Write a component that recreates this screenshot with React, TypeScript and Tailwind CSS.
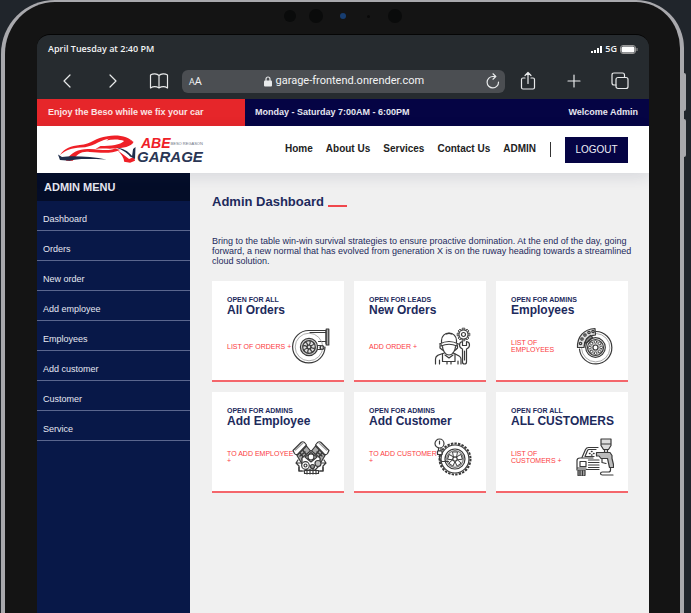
import React from "react";

const iconProps = {
  viewBox: "0 0 38 38",
  className: "h-[38px] w-[38px] shrink-0",
  fill: "none",
  stroke: "#3a3a3a",
  strokeWidth: 1.2,
  strokeLinecap: "round" as const,
  strokeLinejoin: "round" as const,
  "aria-hidden": true,
};

const spokes = (count: number) => Array.from({ length: count }, (_, i) => (i * 360) / count);

function TurboIcon() {
  return (
    <svg {...iconProps}>
      <path d="M34 16.5V3.5H17A16.2 16.2 0 1 0 33 20" />
      <path d="M34 5.5H18M34 14.5H26.500" />
      <path d="M34.200 2h2.600v16h-2.600z" fill="#aaa" />
      <circle cx="17" cy="20" r="13.800" stroke="#888" strokeWidth=".7" />
      <circle cx="17" cy="20" r="8.600" fill="#ccc" />
      <circle cx="17" cy="20" r="6.300" fill="#ddd" />
      <circle cx="17" cy="20" r="2" />
      {spokes(8).map((a) => (
        <path key={a} d="M17 18.200q2-2.200 1-4.300" transform={`rotate(${a} 17 20)`} />
      ))}
      <path d="M25.500 18.500h3v4h-3" />
      <circle cx="30" cy="20.500" r="1.900" />
    </svg>
  );
}

function MechanicIcon() {
  return (
    <svg {...iconProps}>
      <path d="M7.500 15.500v-2a7.500 7.500 0 0 1 15 0v2M5.500 17q9.500-5 19 0M7 17v2q8-3.500 16 0v-2" />
      <path d="M12.500 7q2.500-1.200 5 0M8.500 19.500c0 4 3 8.500 6.500 8.500s6.500-4.500 6.500-8.500" />
      <path d="M6 18.500v2.500l2.500 2M23.500 18.500v2.500l-2 2" />
      <path d="M1.500 37v-5c0-3 2-4 9-6M27 37v-5c0-2-1-3-8-6M5.500 37v-4M24 37v-3" />
      <path d="M8.500 27v7.500h4.500v2.500M21 27v7.500h-4V37M11 34.500h8M11 28l4 3 4-3" />
      <g transform="translate(29.500 7.500)">
        {spokes(8).map((a) => (
          <path key={a} d="M-1.300-4.600v-1.700h2.600v1.700" transform={`rotate(${a})`} strokeWidth=".9" />
        ))}
        <circle r="4.600" />
        <circle r="2" />
      </g>
      <path d="M28.500 22v13q0 2 2 2t2-2V22q3-1 3-4t-3-3.500v4h-4v-4q-3 .5-3 3.500t3 4z" />
      <path d="M30.500 24v9" />
    </svg>
  );
}

function BrakeIcon() {
  return (
    <svg {...iconProps}>
      <path d="M20 4.500A16.200 16.200 0 1 1 3.500 22" />
      <path d="M20.500 6.500A14.200 14.200 0 1 1 5.500 21" stroke="#888" strokeWidth=".7" />
      <path d="M1.500 20.500C1 9.500 8 2 19 1.500l.500 6.500C11.500 8.500 8.500 13 8 20.500z" fill="#ddd" />
      {[[4.500, 16.500], [6, 12], [9, 8], [13, 5.500], [17, 4.500]].map(([x, y]) => (
        <circle key={x} cx={x} cy={y} r="1.200" />
      ))}
      <path d="M8.500 16.500l2-4.500 4-3.500 2 2-4 4z" fill="#888" />
      <circle cx="19.500" cy="20.500" r="9.800" />
      <circle cx="19.500" cy="20.500" r="8" fill="#ccc" />
      {spokes(8).map((a) => (
        <circle key={a} cx="19.500" cy="14.800" r="1.300" transform={`rotate(${a} 19.500 20.500)`} fill="#fff" strokeWidth=".8" />
      ))}
      <circle cx="19.500" cy="20.500" r="2.500" fill="#fff" />
    </svg>
  );
}

function EngineIcon() {
  return (
    <svg {...iconProps}>
      {[false, true].map((flip) => (
        <g key={String(flip)} transform={flip ? "translate(38 0) scale(-1 1)" : undefined}>
          <path d="M1 12.500 9 4.500q1.500-1.500 3.500 0l2 2.500-9 9.500q-2 .5-3-1z" fill="#fff" />
          <path d="M3.500 12l7.500-7" stroke="#999" />
          <path d="M5 17.500l9.500-9.500 4 5-9 12z" fill="#aaa" />
          <path d="M8 15l5 6M11 12.500l4 5M8 18l5-4M10 21l5-4" strokeWidth="1.400" />
          <path d="M6 22l-2 3 3 3v5h3M9 25h4M5 25h3" />
        </g>
      ))}
      <path d="m19 12.500 9 7.500v7l-5 5h-8l-5-5v-7z" fill="#fff" />
      <path d="m13 19 6-4.500 6 4.500-6 5z" fill="#ccc" />
      <circle cx="19" cy="19" r="3" fill="#fff" />
      <circle cx="13.500" cy="27.500" r="3.800" fill="#fff" />
      <circle cx="13.500" cy="27.500" r="1.500" />
      <circle cx="26" cy="25.500" r="3" fill="#bbb" />
      <circle cx="20.500" cy="28.500" r="2" fill="#999" />
      <path d="M12.500 32.500h14v3h-14zM15 32v4M18 31v5M21 31v5M24 32v4M7 29v4h5M31 29v4h-4" />
    </svg>
  );
}

function TireIcon() {
  return (
    <svg {...iconProps}>
      <circle cx="21" cy="21" r="15.500" strokeWidth="2" strokeDasharray="2.400 1.200" strokeLinecap="butt" />
      <circle cx="21" cy="21" r="14" />
      <circle cx="21" cy="21" r="10" />
      <circle cx="21" cy="21" r="8.300" stroke="#777" fill="#eee" />
      {spokes(5).map((a) => (
        <path key={a} d="M19.500 19l-1-5h5l-1 5" transform={`rotate(${a} 21 21)`} fill="#fff" strokeWidth=".9" />
      ))}
      <circle cx="21" cy="21" r="2.200" fill="#fff" />
      <circle cx="5.500" cy="5.500" r="4.500" fill="#fff" />
      <path d="M5.500 6V3M4.500 10v3h2.500v-3" />
      <path d="M3.500 13h4.500v3.500H3.500z" fill="#fff" />
      <path d="M5.500 16.500v4q0 3 3 3h6" />
    </svg>
  );
}

function PaintIcon() {
  return (
    <svg {...iconProps}>
      <path d="M22 9.500h-9.500q-2 0-3 2l-3.500 8M20 11.500h-7q-1 0-1.500 1l-2.500 6H18" />
      <path d="M1 32V22.500q0-2.500 3-2.500h13M4 23.500h6v5H4zM1 30h9" />
      <path d="M12.500 22H23M12.500 24.500H23M12.500 27H23M12.500 29.500H23M10 31.500h13" />
      <path d="M2 32v5q0 1 1 1h4.500q1.500 0 1.500-1v-5zM4 33v4M6.500 33v4" fill="#aaa" />
      <path d="M25 1h10v6.500l-2.500 4h-5L25 7.500zM25 6h10M28.500 11.500v3h3v-3" fill="#ddd" />
      <path d="M20.500 14.500h13.500l2 3v3l1.500 6v3h-4l-2-9H25l-2-2.500h-2.500z" fill="#bbb" />
      <path d="M26 20.500v4l4 1M34.500 29.500V32q0 2-2 2h-6q-2 0-2 1.500t2 1.500H37" />
      <path d="M17.500 15.500h.5M15.500 13.500h.5M15.500 17h.5M13.500 15.500h.5" strokeWidth="1.500" />
    </svg>
  );
}

function CarLogo() {
  return (
    <svg viewBox="0 0 80 32" className="h-8 w-[79px] shrink-0" aria-hidden="true">
      <g fill="#ef2027">
        <path d="M2 21C7 14 13 12 22 11 34 10 38 3 50 2 62 0 72 3 76.500 8 71 4.800 60 3.500 50 4.800 40 7 36 13 23 13.500 14 14 8 16 2 21z" />
        <path d="M76.500 8C74 13 66 14 57 14.500 50 15 46 14 38 15L43 12C54 12 63 11 67 7 62 5 55 5 49 6.500L52 4C62 3 70 4 76.500 8z" />
        <path d="M8 27C13 18 22 14.500 32 15 44 15.500 50 17.500 58 14.500L63 16C54 20 44 19 32 18 24 17 19 20 15 27z" />
        <path d="M60 16L72 25 77 23 78 27 73 29 67 28C67 24 64 20 60 16z" />
      </g>
      <g fill="#1f2d4a">
        <path d="M0 20.500L4 23C14 21.500 34 22.500 49 25.500 30 25 18 24.500 12 27L2 26z" />
        <path d="M59 13.500C66 14.500 71 17 75 22L76 15 78.500 13 78 25 73 22.500C69 18 65 16 59 13.500z" />
      </g>
    </svg>
  );
}

const menuItems = ["Dashboard", "Orders", "New order", "Add employee", "Employees", "Add customer", "Customer", "Service"];
const navLinks = ["Home", "About Us", "Services", "Contact Us", "ADMIN"];

const cards = [
  { tag: "OPEN FOR ALL", title: "All Orders", link: "LIST OF ORDERS +", Icon: TurboIcon },
  { tag: "OPEN FOR LEADS", title: "New Orders", link: "ADD ORDER +", Icon: MechanicIcon },
  { tag: "OPEN FOR ADMINS", title: "Employees", link: "LIST OF EMPLOYEES", Icon: BrakeIcon },
  { tag: "OPEN FOR ADMINS", title: "Add Employee", link: "TO ADD EMPLOYEE +", Icon: EngineIcon },
  { tag: "OPEN FOR ADMINS", title: "Add Customer", link: "TO ADD CUSTOMER +", Icon: TireIcon },
  { tag: "OPEN FOR ALL", title: "ALL CUSTOMERS", link: "LIST OF CUSTOMERS +", Icon: PaintIcon },
];

function BrowserChrome() {
  const line = { fill: "none", stroke: "#e8eaeb", strokeWidth: 1.2, strokeLinecap: "round" as const, strokeLinejoin: "round" as const };
  return (
    <div className="bg-[#262b2f] font-['Open_Sans','Noto_Sans',sans-serif] text-[#f2f3f4]">
      <div className="flex h-7 items-center justify-between pr-[11px] pl-[11px] text-[9px] font-semibold">
        <span>April Tuesday at 2:40 PM</span>
        <span className="flex items-center gap-[3px]">
          <svg viewBox="0 0 11 8" className="h-2 w-[11px]" fill="#fff" aria-hidden="true">
            <path d="M0 6h2v2H0zM3 5h2v3H3zM6 3h2v5H6zM9 1h2v7H9z" />
          </svg>
          5G
          <svg viewBox="0 0 18 9" className="h-[9px] w-[18px]" aria-hidden="true">
            <rect x=".5" y=".5" width="15" height="8" rx="2.500" fill="none" stroke="#999" />
            <rect x="1.500" y="1.500" width="13" height="6" rx="1.500" fill="#fff" />
            <path d="M17 3v3" stroke="#999" />
          </svg>
        </span>
      </div>
      <div className="flex h-9 items-center pr-[19px] pl-5">
        <button aria-label="Back" className="w-5">
          <svg viewBox="0 0 20 20" className="size-5" {...line}><path d="M13 4 7 10l6 6" /></svg>
        </button>
        <button aria-label="Forward" className="ml-[26px] w-5">
          <svg viewBox="0 0 20 20" className="size-5" {...line}><path d="m7 4 6 6-6 6" /></svg>
        </button>
        <button aria-label="Bookmarks" className="ml-[26px] w-5">
          <svg viewBox="0 0 20 20" className="size-5" {...line}>
            <path d="M10 4.500C8 2.500 4 2.500 1.500 4v13c2.500-1.500 6-1.500 8.500 0 2.500-1.500 6-1.500 8.500 0V4C16 2.500 12 2.500 10 4.500zV17" />
          </svg>
        </button>
        <div className="ml-[13px] flex h-[23px] flex-1 items-center justify-between rounded-md bg-[#4b4e52] pr-[5px] pl-[7px]">
          <span className="text-[11px]"><span className="text-[9px]">A</span>A</span>
          <span className="flex items-center gap-1 font-['Roboto','Noto_Sans',sans-serif] text-[11px]">
            <svg viewBox="0 0 8 11" className="h-[11px] w-2" aria-hidden="true">
              <path d="M2 5V3a2 2 0 0 1 4 0v2" fill="none" stroke="#e8eaeb" strokeWidth="1.200" />
              <rect y="4.500" width="8" height="6" rx="1" fill="#e8eaeb" />
            </svg>
            garage-frontend.onrender.com
          </span>
          <button aria-label="Reload">
            <svg viewBox="0 0 14 16" className="h-4 w-3.5" {...line}>
              <path d="M12.500 9A5.700 5.700 0 1 1 7 3.500h2.500M7 .8l2.800 2.700L7 6.200" />
            </svg>
          </button>
        </div>
        <button aria-label="Share" className="ml-[13px] w-5">
          <svg viewBox="0 0 20 20" className="size-5" {...line}>
            <path d="M7 7H5Q3.500 7 3.500 8.500v8Q3.500 18 5 18h10q1.500 0 1.500-1.500v-8Q16.500 7 15 7h-2M10 12.500V1.500M7 4.500l3-3 3 3" />
          </svg>
        </button>
        <button aria-label="New tab" className="ml-[26px] w-5">
          <svg viewBox="0 0 20 20" className="size-5" {...line}><path d="M10 4v12M4 10h12" /></svg>
        </button>
        <button aria-label="Tabs" className="ml-[26px] w-5">
          <svg viewBox="0 0 20 20" className="size-5" {...line}>
            <rect x="6" y="6.500" width="12" height="11" rx="2" />
            <path d="M6 14H4q-2 0-2-2V4q0-2 2-2h8.500q2 0 2 2v2.500" />
          </svg>
        </button>
      </div>
    </div>
  );
}

function Site() {
  return (
    <div className="flex flex-1 flex-col font-['Liberation_Sans',Arial,sans-serif]">
      <div className="flex h-[27px] items-stretch bg-[#050444] text-[9px] font-bold text-[#e6e6f0]">
        <div className="flex w-[34%] items-center bg-[#e6262a] pl-[11px] text-[#fbe4e4]">Enjoy the Beso while we fix your car</div>
        <div className="flex flex-1 items-center justify-between pr-[11px] pl-[10px]">
          <span>Monday - Saturday 7:00AM - 6:00PM</span>
          <span>Welcome Admin</span>
        </div>
      </div>
      <header className="relative flex h-[47px] items-center justify-between bg-white pr-[21px] pl-[21px] shadow-[0_4px_14px_rgba(30,40,80,0.12)]">
        <a href="#" aria-label="ABE Garage" className="flex items-center">
          <CarLogo />
          <span className="font-bold">
            <span className="flex items-center justify-between pl-1 text-[#ef2027]">
              <span className="text-[14px] leading-[13px] italic">ABE</span>
              <span className="text-[4px] leading-[5px] font-normal text-gray-500">BESO REGASON</span>
            </span>
            <span className="block text-[15px] leading-[13px] text-[#2a3654] italic">GARAGE</span>
          </span>
        </a>
        <div className="flex items-center">
          <nav className="flex gap-[13px] pb-0.5 text-[10px] font-bold text-[#222]">
            {navLinks.map((l) => <a key={l} href="#">{l}</a>)}
          </nav>
          <span className="ml-3.5 h-[15px] w-px bg-[#333]" />
          <button className="ml-3.5 h-[26px] w-[63px] bg-[#050444] text-[10px] text-[#eeeef6]">LOGOUT</button>
        </div>
      </header>
      <div className="flex flex-1">
        <aside className="w-1/4 bg-[#081848] text-[#e6e8f2]">
          <h2 className="flex h-7 items-center bg-[#040d28] pl-[7px] text-[11px] font-bold">ADMIN MENU</h2>
          <ul>
            {menuItems.map((m) => (
              <li key={m} className="border-b border-[#5a668e]">
                <a href="#" className="flex h-[29px] items-center pt-2 pl-1.5 text-[9px]">{m}</a>
              </li>
            ))}
          </ul>
        </aside>
        <main className="flex-1 bg-[#f0f0f0] px-[21px] pt-[19px] pl-[22px] text-[#1d2a5c]">
          <h1 className="flex items-center gap-1 text-[13px] leading-5 font-bold">
            Admin Dashboard <span className="mt-2 h-0.5 w-[19px] bg-[#f0474c]" />
          </h1>
          <p className="-mr-2.5 mt-6 text-[9px] leading-[10px]">
            Bring to the table win-win survival strategies to ensure proactive domination. At the end of the day, going forward, a new normal that has evolved from generation X is on the ruway heading towards a streamlined cloud solution.
          </p>
          <div className="mt-[15px] grid grid-cols-3 gap-[10px]">
            {cards.map(({ tag, title, link, Icon }) => (
              <section key={title} className="h-[101px] border-b-2 border-[#f4666b] bg-white pt-[15px] pr-3.5 pl-[15px]">
                <p className="text-[7px] leading-2 font-bold whitespace-nowrap">{tag}</p>
                <h2 className="text-[12px] leading-[13px] font-bold whitespace-nowrap">{title}</h2>
                <div className="mt-2.5 flex items-center justify-between">
                  <a href="#" className="-mr-1 w-[69px] text-[7px] leading-[7px] text-[#fb3b42]">{link}</a>
                  <Icon />
                </div>
              </section>
            ))}
          </div>
        </main>
      </div>
    </div>
  );
}

export default function App() {
  return (
    <div className="relative flex min-h-screen overflow-hidden bg-[#20252b] pr-[7px] pl-px">
      <span className="absolute top-[73px] right-[5px] h-[38px] w-1 rounded-sm bg-[#a9a9ad]" />
      <span className="absolute top-[119px] right-[5px] h-[38px] w-1 rounded-sm bg-[#a9a9ad]" />
      <div className="relative flex flex-1 flex-col rounded-tl-[54px] rounded-tr-[48px] border-4 border-t-2 border-b-0 border-[#a9a9ad] bg-[#141414] pr-[31px] pl-8">
        <div className="flex h-8 items-center justify-center pb-1">
          <div className="flex items-center">
            <span className="size-3 rounded-full bg-[#0a0b0b]" />
            <span className="ml-[13px] size-3.5 rounded-full bg-[#0a0b0b]" />
            <span className="ml-[17px] size-1.5 rounded-full bg-[#173d70]" />
            <span className="ml-[21px] size-[3px] rounded-full bg-[#090909]" />
            <span className="ml-[18px] size-3.5 rounded-full bg-[#0a0b0b]" />
          </div>
        </div>
        <div className="flex flex-1 flex-col overflow-hidden rounded-t-[13px] border-t border-[#050505]">
          <BrowserChrome />
          <Site />
        </div>
      </div>
    </div>
  );
}
